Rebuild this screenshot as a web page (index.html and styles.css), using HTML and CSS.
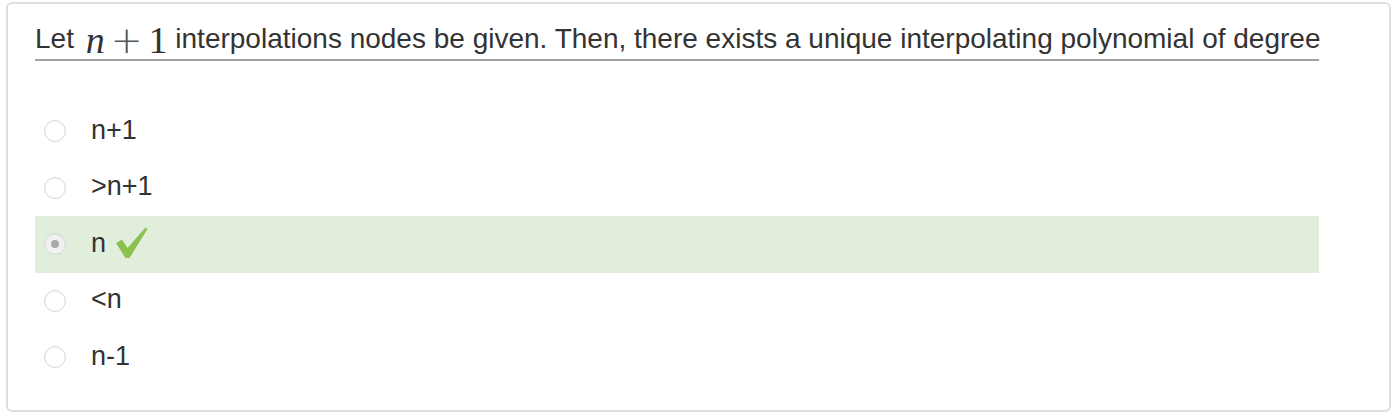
FILE: index.html
```html
<!DOCTYPE html>
<html>
<head>
<meta charset="utf-8">
<link rel="stylesheet" href="styles.css">
</head>
<body>
<div class="card">
  <div class="question">
    <p class="stem">Let <span class="math"><span class="mi">n</span><span class="mo">+</span><span class="mn">1</span></span> interpolations nodes be given. Then, there exists a unique interpolating polynomial of degree</p>
  </div>
  <ul class="options">
    <li class="option"><span class="radio"></span><span class="label">n+1</span></li>
    <li class="option"><span class="radio"></span><span class="label">&gt;n+1</span></li>
    <li class="option correct"><span class="radio checked"></span><span class="label">n</span>
      <svg class="check" width="32" height="32" viewBox="0 0 32 32"><path d="M0 16 L6 12.5 L11.5 21 L29.5 0.5 L31.5 2 L13.5 31 L9.5 31 Z" fill="#8cc152"/></svg>
    </li>
    <li class="option"><span class="radio"></span><span class="label">&lt;n</span></li>
    <li class="option"><span class="radio"></span><span class="label">n-1</span></li>
  </ul>
</div>
</body>
</html>
```
FILE: styles.css
```css
html, body {
  margin: 0;
  padding: 0;
  background: #fff;
}
body {
  font-family: "Liberation Sans", Arial, sans-serif;
  color: #333;
}
.card {
  margin: 2px 3px 0 6px;
  height: 410px;
  box-sizing: border-box;
  border: 2px solid #dedede;
  border-radius: 6px;
  padding: 0 70px 0 27px;
}
.question {
  padding-top: 19px;
}
.stem {
  margin: 0;
  font-size: 28px;
  line-height: 32px;
  padding-bottom: 4px;
  border-bottom: 2px solid #a0a0a0;
  white-space: nowrap;
}
.math {
  font-family: "Liberation Serif", serif;
  font-size: 38px;
  line-height: 0;
  position: relative;
  top: 5px;
  margin-left: 4px;
  color: #333;
}
.mi {
  font-style: italic;
  margin-right: 6px;
}
.mo {
  font-family: "DejaVu Sans", sans-serif;
  font-weight: 200;
  font-size: 38px;
  margin-right: 6px;
  color: #555;
}
.options {
  list-style: none;
  margin: 42px 0 0;
  padding: 0;
}
.option {
  display: flex;
  align-items: center;
  height: 56.5px;
  font-size: 27px;
  padding-left: 9px;
}
.option.correct {
  background: #e1eedb;
}
.radio {
  width: 22px;
  height: 22px;
  border-radius: 50%;
  border: 1px solid #d8d8d8;
  background: #fff;
  box-shadow: inset 0 1px 2px rgba(0,0,0,0.05);
  box-sizing: border-box;
  margin-right: 25px;
  display: flex;
  align-items: center;
  justify-content: center;
  flex: none;
}
.radio.checked {
  background: #f1f1f1;
  border-color: #d6d6d6;
}
.radio.checked::after {
  content: "";
  width: 8px;
  height: 8px;
  border-radius: 50%;
  background: #a9a9a9;
}
.label {
  position: relative;
  top: -1px;
}
.check {
  margin-left: 10px;
  margin-top: -2px;
}
```
